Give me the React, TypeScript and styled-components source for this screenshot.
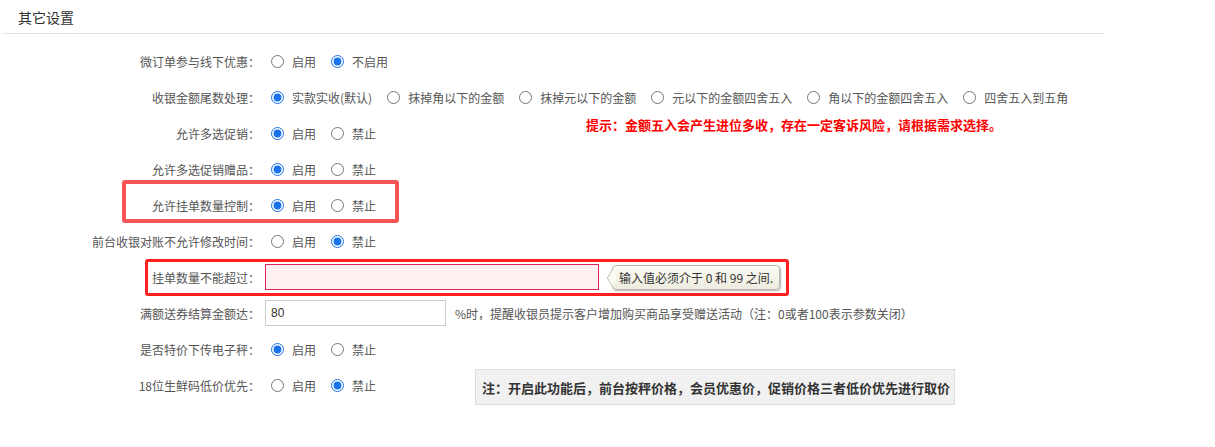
import React from "react";
import styled, { createGlobalStyle } from "styled-components";

const GlobalStyle = createGlobalStyle`
  body {
    margin: 0;
    background: #fff;
    font-family: "Microsoft YaHei", "Noto Sans CJK SC", "Liberation Sans", sans-serif;
    font-size: 12px;
    color: #555;
  }
`;

const Page = styled.div`
  position: relative;
  width: 1215px;
  height: 447px;
  overflow: hidden;
`;

const Header = styled.div`
  margin-left: 3px;
  width: 1102px;
  height: 34px;
  border-bottom: 1px solid #e3e3e3;
  box-sizing: border-box;
  display: flex;
  align-items: center;
  padding-left: 15px;
  font-size: 14px;
  color: #333;
`;

const Form = styled.div`
  padding-top: 9px;
  display: flex;
  flex-direction: column;
`;

const Row = styled.div`
  position: relative;
  height: 36px;
  display: flex;
  align-items: center;
`;

const Label = styled.div`
  width: 260px;
  flex: none;
  text-align: right;
  color: #555;
  white-space: nowrap;
`;

const Options = styled.div`
  display: flex;
  align-items: center;
  margin-left: 11px;
`;

const Option = styled.label`
  display: flex;
  align-items: center;
  margin-right: 15px;
  color: #555;
  white-space: nowrap;
`;

const Radio = styled.input.attrs({ type: "radio" })`
  width: 13px;
  height: 13px;
  margin: 0 8px 0 0;
  accent-color: #1a73e8;
`;

const TextBox = styled.input<{ $w: number; $invalid?: boolean }>`
  margin-left: 5px;
  width: ${(p) => p.$w}px;
  height: 26px;
  box-sizing: border-box;
  border: 1px solid ${(p) => (p.$invalid ? "#e0245e" : "#ccc")};
  background: ${(p) => (p.$invalid ? "#fff1f2" : "#fff")};
  padding: 0 5px;
  font-family: "Liberation Sans", "Noto Sans CJK SC", sans-serif;
  font-size: 12px;
  color: #333;
  outline: none;
`;

const Suffix = styled.span`
  margin-left: 9px;
  color: #555;
  white-space: nowrap;
`;

const Bubble = styled.div`
  position: relative;
  margin-left: 13px;
  height: 25px;
  box-sizing: border-box;
  padding: 0 6px;
  display: flex;
  align-items: center;
  border: 1px solid #b9b8ad;
  border-radius: 4px;
  background: linear-gradient(#fcfbf5, #eeecdf);
  box-shadow: 1px 1px 2px rgba(0, 0, 0, 0.3);
  color: #333;
  white-space: nowrap;

  &::before {
    content: "";
    position: absolute;
    left: -7px;
    top: 6px;
    width: 11px;
    height: 11px;
    background: #fbfaf3;
    border-left: 1px solid #b9b8ad;
    border-bottom: 1px solid #b9b8ad;
    transform: scaleX(0.6) rotate(45deg);
  }
`;

const Hint = styled.div`
  position: absolute;
  left: 586px;
  top: 0;
  color: #ff0000;
  font-size: 13px;
  font-weight: bold;
  white-space: nowrap;
`;

const Note = styled.div`
  margin-left: 84px;
  height: 36px;
  box-sizing: border-box;
  width: 480px;
  padding-left: 6px;
  display: flex;
  align-items: center;
  background: #f1f1f1;
  border: 1px solid #ddd;
  font-size: 13px;
  font-weight: bold;
  color: #333;
  white-space: nowrap;
  position: relative;
  top: 2px;
`;

const Mark = styled.div<{ $x: number; $y: number; $w: number; $h: number; $thick: number; $color: string }>`
  position: absolute;
  left: ${(p) => p.$x}px;
  top: ${(p) => p.$y}px;
  width: ${(p) => p.$w}px;
  height: ${(p) => p.$h}px;
  box-sizing: border-box;
  border: ${(p) => p.$thick}px solid ${(p) => p.$color};
  border-radius: 3px;
  pointer-events: none;
`;

type Choice = { text: string; checked?: boolean };

function RadioRow({ name, label, choices, children }: { name: string; label: string; choices: Choice[]; children?: React.ReactNode }) {
  return (
    <Row>
      <Label>{label}</Label>
      <Options>
        {choices.map((c) => (
          <Option key={c.text}>
            <Radio name={name} defaultChecked={!!c.checked} />
            {c.text}
          </Option>
        ))}
      </Options>
      {children}
    </Row>
  );
}

const onOff = (on: boolean): Choice[] => [
  { text: "启用", checked: on },
  { text: "禁止", checked: !on },
];

export default function App() {
  return (
    <Page>
      <GlobalStyle />
      <Header>其它设置</Header>
      <Form>
        <RadioRow
          name="wx"
          label="微订单参与线下优惠："
          choices={[{ text: "启用" }, { text: "不启用", checked: true }]}
        />
        <RadioRow
          name="tail"
          label="收银金额尾数处理："
          choices={[
            { text: "实款实收(默认)", checked: true },
            { text: "抹掉角以下的金额" },
            { text: "抹掉元以下的金额" },
            { text: "元以下的金额四舍五入" },
            { text: "角以下的金额四舍五入" },
            { text: "四舍五入到五角" },
          ]}
        />
        <RadioRow name="multi" label="允许多选促销：" choices={onOff(true)}>
          <Hint>提示：金额五入会产生进位多收，存在一定客诉风险，请根据需求选择。</Hint>
        </RadioRow>
        <RadioRow name="gift" label="允许多选促销赠品：" choices={onOff(true)} />
        <RadioRow name="hang" label="允许挂单数量控制：" choices={onOff(true)} />
        <RadioRow name="time" label="前台收银对账不允许修改时间：" choices={onOff(false)} />
        <Row>
          <Label>挂单数量不能超过：</Label>
          <TextBox $w={334} $invalid defaultValue="" />
          <Bubble>输入值必须介于 0 和 99 之间.</Bubble>
        </Row>
        <Row>
          <Label>满额送券结算金额达：</Label>
          <TextBox $w={181} defaultValue="80" />
          <Suffix>%时，提醒收银员提示客户增加购买商品享受赠送活动（注：0或者100表示参数关闭）</Suffix>
        </Row>
        <RadioRow name="scale" label="是否特价下传电子秤：" choices={onOff(true)} />
        <RadioRow name="fresh" label="18位生鲜码低价优先：" choices={onOff(false)}>
          <Note>注：开启此功能后，前台按秤价格，会员优惠价，促销价格三者低价优先进行取价</Note>
        </RadioRow>
      </Form>
      <Mark $x={122} $y={180} $w={277} $h={43} $thick={4} $color="#f85656" />
      <Mark $x={145} $y={259} $w={644} $h={37} $thick={3} $color="#ff2020" />
    </Page>
  );
}
